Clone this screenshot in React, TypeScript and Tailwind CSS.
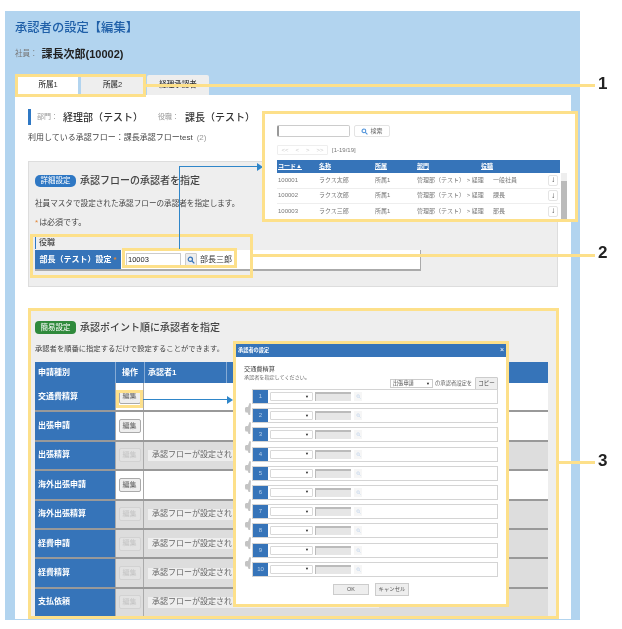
import React from 'react';

/* ---------- data ---------- */
const settingRows = [
  { label: '交通費精算', enabled: true },
  { label: '出張申請', enabled: true },
  { label: '出張精算', enabled: false },
  { label: '海外出張申請', enabled: true },
  { label: '海外出張精算', enabled: false },
  { label: '経費申請', enabled: false },
  { label: '経費精算', enabled: false },
  { label: '支払依頼', enabled: false }
];

const searchRows = [
  { code: '100001', name: 'ラクス太郎', dept: '管理部（テスト） > 経理', role: '一般社員' },
  { code: '100002', name: 'ラクス次郎', dept: '管理部（テスト） > 経理', role: '課長' },
  { code: '100003', name: 'ラクス三郎', dept: '管理部（テスト） > 経理', role: '部長' }
];

const steps = ['1', '2', '3', '4', '5', '6', '7', '8', '9', '10'];

/* ---------- helpers ---------- */
const Lens = ({ className }: { className: string }) => (
  <svg viewBox="0 0 12 12" className={className} fill="none" stroke="currentColor" strokeWidth="1.8">
    <circle cx="5" cy="5" r="3.2" />
    <path d="M7.5 7.5 11 11" />
  </svg>
);

const EditButton = ({ enabled }: { enabled: boolean }) => (
  <div
    className={
      enabled
        ? 'flex h-[14px] w-[22px] items-center justify-center rounded-[2px] border border-[#aaa] bg-[#eee] text-[7px] text-[#666]'
        : 'flex h-[14px] w-[22px] items-center justify-center rounded-[2px] border border-[#d2d2d2] bg-[#e2e2e2] text-[7px] text-[#c4c4c4]'
    }
  >
    編集
  </div>
);

const Callout = ({ className }: { className: string }) => (
  <div className={`absolute border-[3px] border-[#fde08a] ${className}`} />
);

const Rule = ({ className }: { className: string }) => <div className={`absolute h-[3px] bg-[#fde08a] ${className}`} />;

const Number = ({ value, className }: { value: string; className: string }) => (
  <div className={`absolute text-[17px] leading-[20px] font-bold text-[#222] ${className}`}>{value}</div>
);

const SearchPopup = () => (
  <div className="absolute top-[111px] left-[262px] h-[111px] w-[316px] overflow-hidden border-[3px] border-[#fde08a] bg-white pt-[11px] pl-[12px]">
    <div className="flex items-center gap-[4px]">
      <div className="h-[12px] w-[73px] rounded-[2px] border border-l-2 border-[#ccc] border-l-[#999]" />
      <div className="flex h-[12px] w-[36px] items-center justify-center gap-[2px] rounded-[2px] border border-[#e4e4e4] text-[6px] text-[#666]">
        <Lens className="h-[7px] w-[7px] text-[#4a90d9]" />
        検索
      </div>
    </div>
    <div className="mt-[8px] flex h-[10px] items-center text-[6px] text-[#777]">
      <div className="flex h-[10px] w-[51px] items-center justify-around rounded-[1px] border border-[#eee] text-[#ccc]">
        <span>&lt;&lt;</span>
        <span>&lt;</span>
        <span>&gt;</span>
        <span>&gt;&gt;</span>
      </div>
      <span className="ml-[4px]">[1-19/19]</span>
    </div>
    <div className="mt-[5px] grid h-[13px] w-[283px] grid-cols-[41px_56px_42px_64px_1fr] items-center bg-[#3674b9] pl-[1px] text-[6px] font-bold text-white">
      <span className="underline">コード▲</span>
      <span className="underline">名称</span>
      <span className="underline">所属</span>
      <span className="underline">部門</span>
      <span className="underline">役職</span>
    </div>
    <div className="relative w-[290px]">
      {searchRows.map((row) => (
        <div
          key={row.code}
          className="grid h-[15.5px] w-[283px] grid-cols-[41px_56px_42px_64px_1fr] items-center border-b border-[#eee] pl-[1px] text-[6px] whitespace-nowrap text-[#777]"
        >
          <span>{row.code}</span>
          <span>{row.name}</span>
          <span>所属1</span>
          <span>{row.dept}</span>
          <span className="flex items-center justify-between pr-[2px] pl-[12px]">
            {row.role}
            <span className="flex h-[11px] w-[10px] items-center justify-center rounded-[2px] border border-[#e4e4e4] text-[8px] font-bold text-[#444]">
              ↓
            </span>
          </span>
        </div>
      ))}
      <div className="absolute top-0 right-0 h-[46px] w-[6px] bg-[#eee]">
        <div className="mt-[8px] h-[38px] bg-[#bbb]" />
      </div>
    </div>
  </div>
);

const StepConnector = () => (
  <svg viewBox="0 0 6 12" className="absolute top-[13px] left-[-8px] h-[12px] w-[6px] text-[#c4c4c4]" fill="currentColor">
    <path d="M4.5 0 6 .4 5.2 12H3.6L2.6 9.5H.6L0 8V5l1-1h2z" />
  </svg>
);

const ApproverModal = () => (
  <div className="absolute top-[341px] left-[233px] h-[266px] w-[276px] border-[3px] border-[#fde08a] bg-white">
    <div className="flex h-[13px] items-center justify-between bg-[#3674b9] px-[2px] text-[5.2px] font-bold text-white">
      <span>承認者の設定</span>
      <span className="text-[7px] font-normal">×</span>
    </div>
    <div className="px-[8px] pt-[7px] text-[#444]">
      <div className="text-[6.2px] leading-[9px]">交通費精算</div>
      <div className="text-[5.1px] leading-[8px] text-[#666]">承認者を指定してください。</div>
    </div>
    <div className="mt-[-4px] flex h-[13px] items-center justify-end pr-[8px] text-[5.3px] text-[#666]">
      <div className="flex h-[9px] w-[43px] items-center justify-between border border-[#ccc] px-[2px] text-[5.2px] text-[#444]">
        出張申請
        <span className="text-[4px] text-[#222]">▼</span>
      </div>
      <span className="ml-[2px] w-[38px] whitespace-nowrap">の承認者設定を</span>
      <div className="ml-[2px] flex h-[13px] w-[23px] items-center justify-center rounded-[1px] border border-[#ccc] bg-[#eee] text-[5.5px] text-[#444]">
        コピー
      </div>
    </div>
    <div className="mt-[-1px] ml-[16px] flex w-[246px] flex-col gap-[4.2px]">
      {steps.map((step, i) => (
        <div key={step} className="relative flex h-[15px] items-center border border-[#d4d4d4] bg-white">
          <div className="flex h-full w-[15px] items-center justify-center bg-[#3674b9] text-[6px] text-[#b8d0ea]">{step}</div>
          <div className="ml-[2px] flex h-[9px] w-[43px] items-center justify-end rounded-[1px] border border-[#d8d8d8] pr-[3px] text-[4px] text-[#222]">
            ▼
          </div>
          <div className="ml-[2px] h-[9px] w-[36px] border-t-2 border-l border-[#bbb] bg-[#e6e6e6]" />
          <div className="ml-[3px] flex h-[9px] w-[8px] items-center justify-center bg-[#f6f6f6]">
            <Lens className="h-[5px] w-[5px] text-[#c6d8ec]" />
          </div>
          {i < steps.length - 1 && <StepConnector />}
        </div>
      ))}
    </div>
    <div className="mt-[6px] flex items-center justify-center gap-[6px] text-[5.4px] text-[#555]">
      <div className="flex h-[11px] w-[36px] items-center justify-center border border-[#ccc] bg-[#eee]">OK</div>
      <div className="flex h-[13px] w-[34px] items-center justify-center border border-[#ccc] bg-[#eee]">キャンセル</div>
    </div>
  </div>
);

const Overlays = () => (
  <>
    {/* yellow callouts */}
    <Callout className="top-[74px] left-[15px] h-[23px] w-[131px]" />
    <Rule className="top-[84px] left-[146px] w-[449px]" />
    <Number value="1" className="top-[74px] left-[598px]" />

    <Callout className="top-[234px] left-[30px] h-[44px] w-[223px]" />
    <Callout className="top-[248px] left-[122px] h-[20px] w-[115px]" />
    <Rule className="top-[254px] left-[253px] w-[342px]" />
    <Number value="2" className="top-[243px] left-[598px]" />

    <Callout className="top-[308px] left-[28px] h-[311px] w-[531px]" />
    <Callout className="top-[390px] left-[116px] h-[18px] w-[27px]" />
    <Rule className="top-[461px] left-[559px] w-[36px]" />
    <Number value="3" className="top-[451px] left-[598px]" />

    {/* blue arrows */}
    <div className="absolute top-[166px] left-[179px] h-[83px] w-px bg-[#2f86c9]" />
    <div className="absolute top-[166px] left-[179px] h-px w-[78px] bg-[#2f86c9]" />
    <div className="absolute top-[163px] left-[257px] h-0 w-0 border-y-[4px] border-l-[6px] border-y-transparent border-l-[#2f86c9]" />
    <div className="absolute top-[399px] left-[143px] h-px w-[84px] bg-[#2f86c9]" />
    <div className="absolute top-[396px] left-[227px] h-0 w-0 border-y-[4px] border-l-[6px] border-y-transparent border-l-[#2f86c9]" />

    <SearchPopup />
    <ApproverModal />
  </>
);

const App: React.FC = () => {
  return (
    <div className="relative h-[629px] w-[622px] overflow-hidden bg-white pt-[11px] pl-[5px] blur-[0.35px] [font-family:'Liberation_Sans','Noto_Sans_CJK_JP',sans-serif]">
      <div className="h-[609px] w-[575px] bg-[#b2d4ef] pr-[9px] pl-[10px]">
        {/* title */}
        <div className="flex h-[17px] translate-y-[9px] items-center text-[12.3px] font-medium text-[#1f5fa8]">承認者の設定【編集】</div>
        <div className="mt-[19px] flex h-[14px] items-center text-[11px] font-bold text-[#222]">
          <span className="mr-[4px] text-[7.5px] font-normal text-[#777]">社員：</span>
          課長次郎(10002)
        </div>

        {/* tabs */}
        <div className="mt-[14px] ml-[3px] flex h-[20px] gap-[3px] text-[7.5px] font-medium text-[#333]">
          <div className="flex w-[60px] items-center justify-center bg-white">所属1</div>
          <div className="flex w-[63px] items-center justify-center bg-[#eee]">所属2</div>
          <div className="flex w-[62px] items-center justify-center rounded-t-[2px] bg-[#eee]">経理承認者</div>
        </div>

        {/* content */}
        <div className="h-[524px] w-[556px] bg-white px-[13px] pt-[14px]">
          <div className="flex h-[16px] items-center border-l-[3px] border-[#2f78c4] pl-[6px] text-[10px] text-[#333]">
            <span className="mr-[5px] w-[21px] text-[7px] whitespace-nowrap text-[#999]">部門：</span>
            <span className="font-medium">経理部（テスト）</span>
            <span className="mr-[4px] ml-[15px] w-[23px] text-[7px] whitespace-nowrap text-[#999]">役職：</span>
            <span className="font-medium">課長（テスト）</span>
          </div>
          <div className="mt-[7px] flex h-[12px] items-center text-[8px] text-[#444]">
            利用している承認フロー：課長承認フローtest<span className="ml-[4px] text-[#999]">(2)</span>
          </div>

          {/* detail settings */}
          <div className="mt-[17px] h-[126px] w-[530px] border border-[#ddd] bg-[#eee] pt-[12px] pl-[6px]">
            <div className="flex h-[13px] items-center">
              <span className="flex h-[12px] w-[41px] items-center justify-center rounded-[5px] bg-[#2f78c4] text-[7.5px] text-white">詳細設定</span>
              <span className="ml-[4px] text-[10px] font-medium text-[#444]">承認フローの承認者を指定</span>
            </div>
            <div className="mt-[11px] flex h-[12px] items-center text-[7.6px] text-[#444]">社員マスタで設定された承認フローの承認者を指定します。</div>
            <div className="mt-[7px] flex h-[12px] items-center text-[8px] text-[#444]">
              <span className="mr-[1px] text-[#e2883a]">*</span>は必須です。
            </div>
            <div className="mt-[8px] flex h-[12px] items-center border-l border-[#2f78c4] pl-[3px] text-[8px] font-medium text-[#444]">役職</div>
            <div className="mt-[1px] flex h-[21px] w-[386px] items-center border-r border-b-2 border-[#aaa] bg-white">
              <div className="flex h-full w-[86px] items-center justify-center bg-[#3674b9] text-[8px] font-bold text-white">
                部長（テスト）設定<span className="ml-[2px] text-[#e2883a]">*</span>
              </div>
              <div className="ml-[5px] flex h-[14px] w-[55px] items-center border border-[#ccc] pl-[1px] text-[7.5px] text-[#222]">10003</div>
              <div className="ml-[4px] flex h-[13px] w-[12px] items-center justify-center rounded-[1px] border border-[#ccc] bg-[#eee]">
                <Lens className="h-[8px] w-[8px] text-[#3674b9]" />
              </div>
              <span className="ml-[3px] text-[8px] text-[#333]">部長三郎</span>
            </div>
          </div>

          {/* easy settings */}
          <div className="mt-[21px] h-[311px] w-[530px] overflow-hidden bg-[#eee] pt-[13px] pl-[7px]">
            <div className="flex h-[13px] items-center">
              <span className="flex h-[13px] w-[41px] items-center justify-center rounded-[4px] bg-[#2f8a3c] text-[7.5px] text-white">簡易設定</span>
              <span className="ml-[4px] text-[10px] font-medium text-[#444]">承認ポイント順に承認者を指定</span>
            </div>
            <div className="mt-[9px] flex h-[12px] items-center text-[7.3px] text-[#444]">承認者を順番に指定するだけで設定することができます。</div>
            <div className="mt-[7px] grid h-[21px] w-[513px] grid-cols-[80px_29px_82px_1fr] bg-[#3674b9] text-[8px] font-bold text-white">
              <div className="flex items-center pl-[3px]">申請種別</div>
              <div className="flex items-center justify-center border-l border-white/40">操作</div>
              <div className="flex items-center border-l border-white/40 pl-[3px]">承認者1</div>
              <div className="border-l border-white/40" />
            </div>
            {settingRows.map((row) => (
              <div key={row.label} className="grid h-[29.4px] w-[513px] grid-cols-[80px_29px_1fr] border-b-2 border-[#999]">
                <div className="flex items-center bg-[#3674b9] pl-[3px] text-[8px] font-bold text-white">{row.label}</div>
                <div className={`flex items-center justify-center border-x border-[#aaa] ${row.enabled ? 'bg-white' : 'bg-[#ddd]'}`}>
                  <EditButton enabled={row.enabled} />
                </div>
                {row.enabled ? (
                  <div className="bg-white" />
                ) : (
                  <div className="flex items-center bg-[#ddd] pl-[4px]">
                    <span className="flex h-[11px] w-[231px] items-center bg-[#eee] pl-[4px] text-[8px] text-[#666]">承認フローが設定され</span>
                  </div>
                )}
              </div>
            ))}
          </div>
        </div>
      </div>
      <Overlays />
    </div>
  );
};

export default App;
